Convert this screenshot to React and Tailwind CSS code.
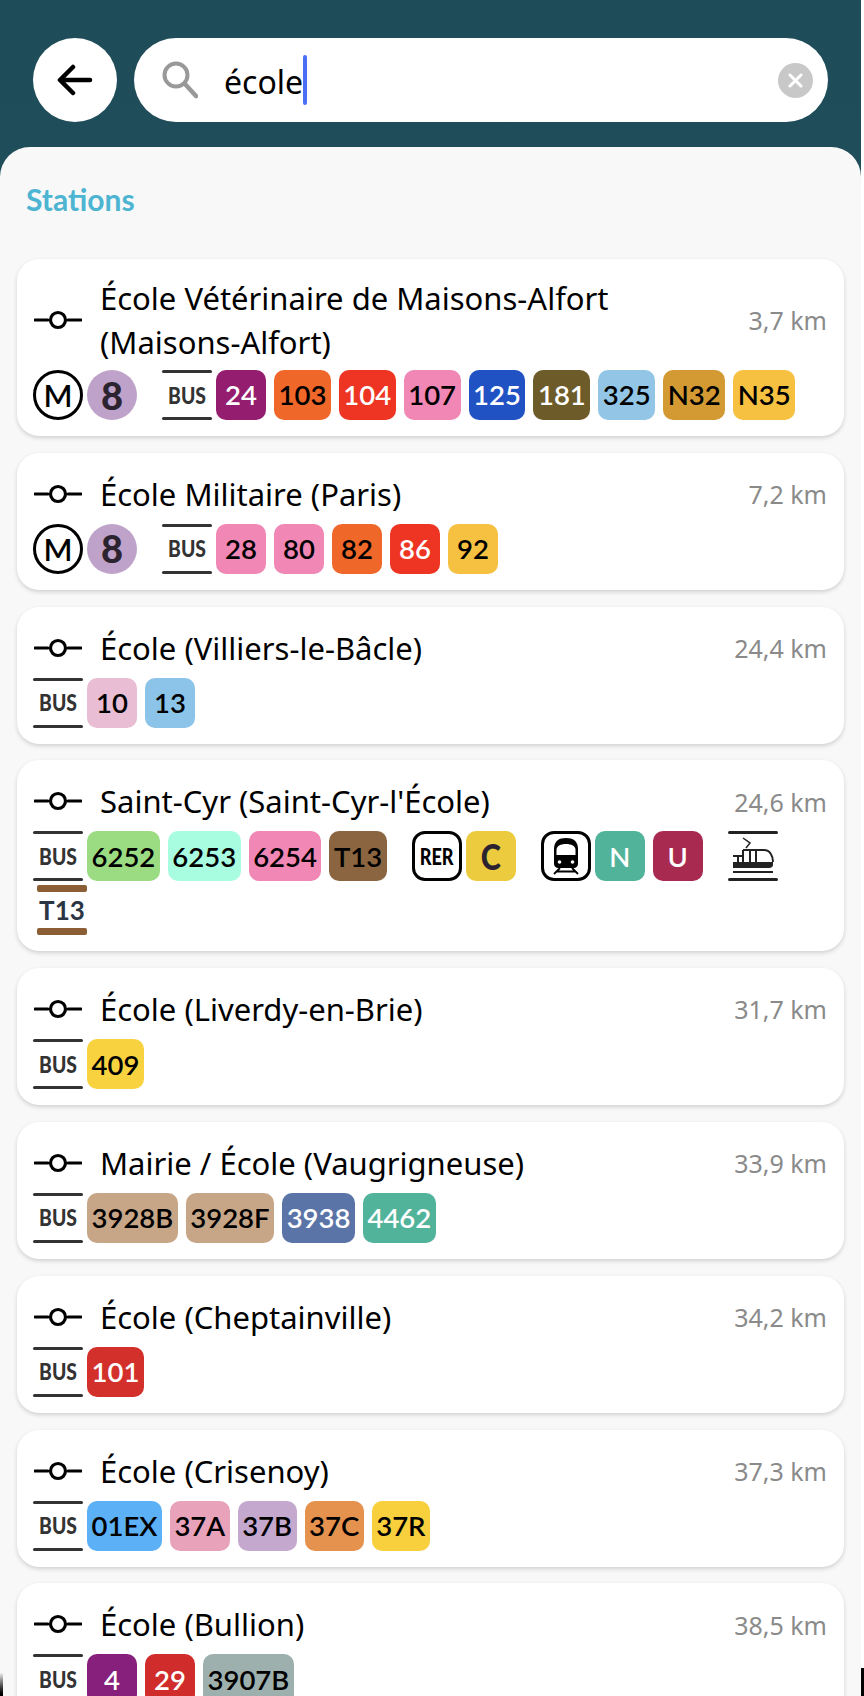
import { useState } from "react";

const latoFont = "font-['Lato',sans-serif]";

const PINK = "bg-[#f087b4]";
const ORANGE = "bg-[#f0672a]";
const RED = "bg-[#ee3524]";
const YELLOW = "bg-[#f6c141]";

const stations = [
  {
    name: "École Vétérinaire de Maisons-Alfort (Maisons-Alfort)",
    distance: "3,7 km",
    groups: [
      { mode: "metro", badge: "8" },
      {
        mode: "bus",
        lines: [
          ["24", "bg-[#951d6f]", true],
          ["103", ORANGE],
          ["104", RED, true],
          ["107", PINK],
          ["125", "bg-[#2152c4]", true],
          ["181", "bg-[#6d5c2a]", true],
          ["325", "bg-[#93c6e6]"],
          ["N32", "bg-[#d39a33]"],
          ["N35", YELLOW],
        ],
      },
    ],
  },
  {
    name: "École Militaire (Paris)",
    distance: "7,2 km",
    groups: [
      { mode: "metro", badge: "8" },
      {
        mode: "bus",
        lines: [
          ["28", PINK],
          ["80", PINK],
          ["82", ORANGE],
          ["86", RED, true],
          ["92", YELLOW],
        ],
      },
    ],
  },
  {
    name: "École (Villiers-le-Bâcle)",
    distance: "24,4 km",
    groups: [
      {
        mode: "bus",
        lines: [
          ["10", "bg-[#e9bdd3]"],
          ["13", "bg-[#8cc4e9]"],
        ],
      },
    ],
  },
  {
    name: "Saint-Cyr (Saint-Cyr-l'École)",
    distance: "24,6 km",
    groups: [
      {
        mode: "bus",
        lines: [
          ["6252", "bg-[#9bdc82]"],
          ["6253", "bg-[#a8fde0]"],
          ["6254", PINK],
          ["T13", "bg-[#8a6540]"],
        ],
      },
      { mode: "rer" },
      { mode: "train" },
      { mode: "tram" },
      { mode: "t13" },
    ],
  },
  {
    name: "École (Liverdy-en-Brie)",
    distance: "31,7 km",
    groups: [{ mode: "bus", lines: [["409", "bg-[#f8d33f]"]] }],
  },
  {
    name: "Mairie / École (Vaugrigneuse)",
    distance: "33,9 km",
    groups: [
      {
        mode: "bus",
        lines: [
          ["3928B", "bg-[#c7a687]"],
          ["3928F", "bg-[#c7a687]"],
          ["3938", "bg-[#5a74a8]", true],
          ["4462", "bg-[#52b39b]", true],
        ],
      },
    ],
  },
  {
    name: "École (Cheptainville)",
    distance: "34,2 km",
    groups: [{ mode: "bus", lines: [["101", "bg-[#d3302c]", true]] }],
  },
  {
    name: "École (Crisenoy)",
    distance: "37,3 km",
    groups: [
      {
        mode: "bus",
        lines: [
          ["01EX", "bg-[#5cb0f5]"],
          ["37A", "bg-[#e8a3bb]"],
          ["37B", "bg-[#c5a8cd]"],
          ["37C", "bg-[#e5924f]"],
          ["37R", "bg-[#f8cf3c]"],
        ],
      },
    ],
  },
  {
    name: "École (Bullion)",
    distance: "38,5 km",
    groups: [
      {
        mode: "bus",
        lines: [
          ["4", "bg-[#87207d]", true],
          ["29", "bg-[#d12c2c]", true],
          ["3907B", "bg-[#9eb0ad]"],
        ],
      },
    ],
  },
];

/* ================= ICONS ================= */
const StopIcon = () => (
  <svg width="48" height="20" viewBox="0 0 48 20" className="mb-[6px] ml-px shrink-0">
    <path d="M1 10h13M34 10h13" stroke="#000" strokeWidth="3" strokeLinecap="round" />
    <circle cx="24" cy="10" r="7.500" fill="none" stroke="#000" strokeWidth="3.200" />
  </svg>
);

const TrainIcon = () => (
  <div className="flex h-[50px] w-[50px] items-center justify-center rounded-[13px] border-[3px] border-black">
    <svg width="30" height="38" viewBox="0 0 30 38">
      <path d="M3 12C3 4 8 1 15 1s12 3 12 11v15c0 2-2 4-4 4H7c-2 0-4-2-4-4z" fill="#000" />
      <path d="M5.500 13c0-4 4-6 9.500-6s9.500 2 9.500 6v5h-19z" fill="#fff" />
      <circle cx="8.500" cy="25" r="1.800" fill="#fff" />
      <circle cx="21.500" cy="25" r="1.800" fill="#fff" />
      <path d="M9 31l-6 6M21 31l6 6M6 34.500h18" stroke="#000" strokeWidth="1.800" fill="none" />
    </svg>
  </div>
);

const TramIcon = () => (
  <svg width="50" height="50" viewBox="0 0 50 50" fill="none" className="shrink-0">
    <rect x="0" y="0" width="50" height="3" rx="1.500" fill="#222" />
    <path d="M15 7l7 5-4 5" stroke="#222" strokeWidth="1.500" />
    <path d="M15 19h21c6 0 9 6 9 12M22 19v12M28 19v12M15 19v12M10 25v6M5 25h10" stroke="#222" strokeWidth="2" />
    <path d="M5 31h40v3c0 2-2 3-4 3H5z" fill="#222" />
    <path d="M5 41h40" stroke="#222" strokeWidth="2" />
    <rect x="0" y="47" width="50" height="3" rx="1.500" fill="#222" />
  </svg>
);

const BusIcon = () => (
  <div className="flex h-[50px] w-[50px] shrink-0 flex-col justify-between">
    <div className="h-[3px] rounded-full bg-[#333]" />
    <span className="origin-center scale-x-[0.84] text-center font-['Lato',sans-serif] text-[23px] leading-none font-black text-[#333]">
      BUS
    </span>
    <div className="h-[3px] rounded-full bg-[#333]" />
  </div>
);

const T13Icon = () => (
  <div className="ml-1 flex h-[50px] w-[50px] flex-col justify-between">
    <div className="h-[7px] rounded-[2px] bg-[#8b5e35]" />
    <span className="text-center font-['Lato',sans-serif] text-[26px] leading-none font-bold text-[#2b3544]">
      T13
    </span>
    <div className="h-[7px] rounded-[2px] bg-[#8b5e35]" />
  </div>
);

/* ================= BADGES ================= */
const LineBadge = ({ label, color, light }) => (
  <div
    className={`flex h-[50px] min-w-[50px] items-center justify-center rounded-[10px] px-[4.5px] ${latoFont} text-[27.5px] font-semibold ${color} ${
      light ? "text-white" : "text-black"
    }`}
  >
    {label}
  </div>
);

const ModeGroup = ({ group }) => {
  if (group.mode === "metro") {
    return (
      <div className="flex items-center gap-1">
        <div className="flex h-[50px] w-[50px] items-center justify-center rounded-full border-[3px] border-black font-['Lato',sans-serif] text-[31px] font-semibold text-black">
          M
        </div>
        <div className="flex h-[50px] w-[50px] items-center justify-center rounded-full bg-[#bfa2c9] font-['Lato',sans-serif] text-[38px] font-black text-[#2b2430]">
          {group.badge}
        </div>
      </div>
    );
  }

  if (group.mode === "rer") {
    return (
      <div className="flex items-center gap-1">
        <div className="flex h-[50px] w-[50px] items-center justify-center rounded-[13px] border-[3px] border-black">
          <span className="scale-x-[0.82] font-['Lato',sans-serif] text-[22px] font-black text-black">RER</span>
        </div>
        <div className="flex h-[50px] w-[50px] items-center justify-center rounded-[10px] bg-[#eccb3f]">
          <span className="scale-x-[0.85] font-['Lato',sans-serif] text-[36px] font-black text-[#2b2430]">C</span>
        </div>
      </div>
    );
  }

  if (group.mode === "train") {
    return (
      <div className="flex items-center gap-1">
        <TrainIcon />
        <div className="flex gap-2">
          <LineBadge label="N" color="bg-[#52b39b]" light />
          <LineBadge label="U" color="bg-[#a82a50]" light />
        </div>
      </div>
    );
  }

  if (group.mode === "tram") return <TramIcon />;
  if (group.mode === "t13") return <T13Icon />;

  return (
    <div className="flex items-center gap-1">
      <BusIcon />
      <div className="flex gap-2">
        {group.lines.map(([label, color, light]) => (
          <LineBadge key={label} label={label} color={color} light={light} />
        ))}
      </div>
    </div>
  );
};

const StationCard = ({ station }) => (
  <div className="rounded-[22px] bg-white pt-5 pr-[17px] pb-4 pl-4 shadow-[0_2px_4px_rgba(0,0,0,0.16)]">
    <div className="flex min-h-12 items-center">
      <StopIcon />
      <div className="ml-[18px] flex-1 -translate-y-[3px] pr-10 font-['Noto_Sans',sans-serif] text-[31px] leading-[44px] text-black">
        {station.name}
      </div>
      <div className="shrink-0 -translate-y-[2px] font-['Noto_Sans',sans-serif] text-[25px] whitespace-nowrap text-[#8a8a8a]">
        {station.distance}
      </div>
    </div>
    <div className="mt-[3px] flex flex-wrap gap-x-[25px] gap-y-1">
      {station.groups.map((group, i) => (
        <ModeGroup key={i} group={group} />
      ))}
    </div>
  </div>
);

const App = () => {
  const [query] = useState("école");

  return (
    <div className="relative h-[1696px] w-[864px] overflow-hidden bg-white">
      <div className="h-full w-[861px] bg-gradient-to-b from-[#1f4c59] to-[#245564]">
        {/* SEARCH BAR */}
        <div className="flex gap-[17px] px-[33px] pt-[38px] pb-[25px]">
          <button className="flex h-[84px] w-[84px] shrink-0 items-center justify-center rounded-full bg-white">
            <svg width="36" height="32" viewBox="0 0 36 32" fill="none">
              <path d="M33 16H4M16 3L3 16l13 13" stroke="#000" strokeWidth="4.500" strokeLinecap="round" strokeLinejoin="round" />
            </svg>
          </button>
          <div className="flex h-[84px] flex-1 items-center rounded-full bg-white pr-[15px] pl-7">
            <svg width="36" height="38" viewBox="0 0 36 38" fill="none" className="shrink-0">
              <circle cx="14" cy="14" r="11.500" stroke="#999" strokeWidth="4" />
              <path d="M23 23l11 12" stroke="#999" strokeWidth="4.500" strokeLinecap="round" />
            </svg>
            <div className="ml-[26px] flex flex-1 items-center font-['Noto_Sans',sans-serif] text-[32px] text-black">
              <span className="translate-y-[2px]">{query}</span>
              <span className="h-[50px] w-1 rounded-full bg-[#4c6ef5]" />
            </div>
            <div className="flex h-[35px] w-[35px] items-center justify-center rounded-full bg-[#c8c8c8]">
              <svg width="15" height="15" viewBox="0 0 15 15">
                <path d="M2 2l11 11M13 2L2 13" stroke="#fff" strokeWidth="3" strokeLinecap="round" />
              </svg>
            </div>
          </div>
        </div>

        {/* RESULTS */}
        <div className="h-full rounded-t-[30px] bg-[#f8f8f8] px-[17px]">
          <h2 className="pt-8 pb-10 pl-[9px] font-['Lato',sans-serif] text-[30px] leading-[40px] font-bold text-[#4db4d2]">
            Stations
          </h2>
          <div className="flex flex-col gap-[16.8px]">
            {stations.map((station) => (
              <StationCard key={station.name} station={station} />
            ))}
          </div>
        </div>
      </div>

      {/* rounded screen corners */}
      <div className="absolute right-0 bottom-0 h-[28px] w-[3px] bg-black" />
      <div className="absolute bottom-0 left-0 h-[24px] w-[3px] bg-gradient-to-b from-white to-black" />
    </div>
  );
};

export default App;
